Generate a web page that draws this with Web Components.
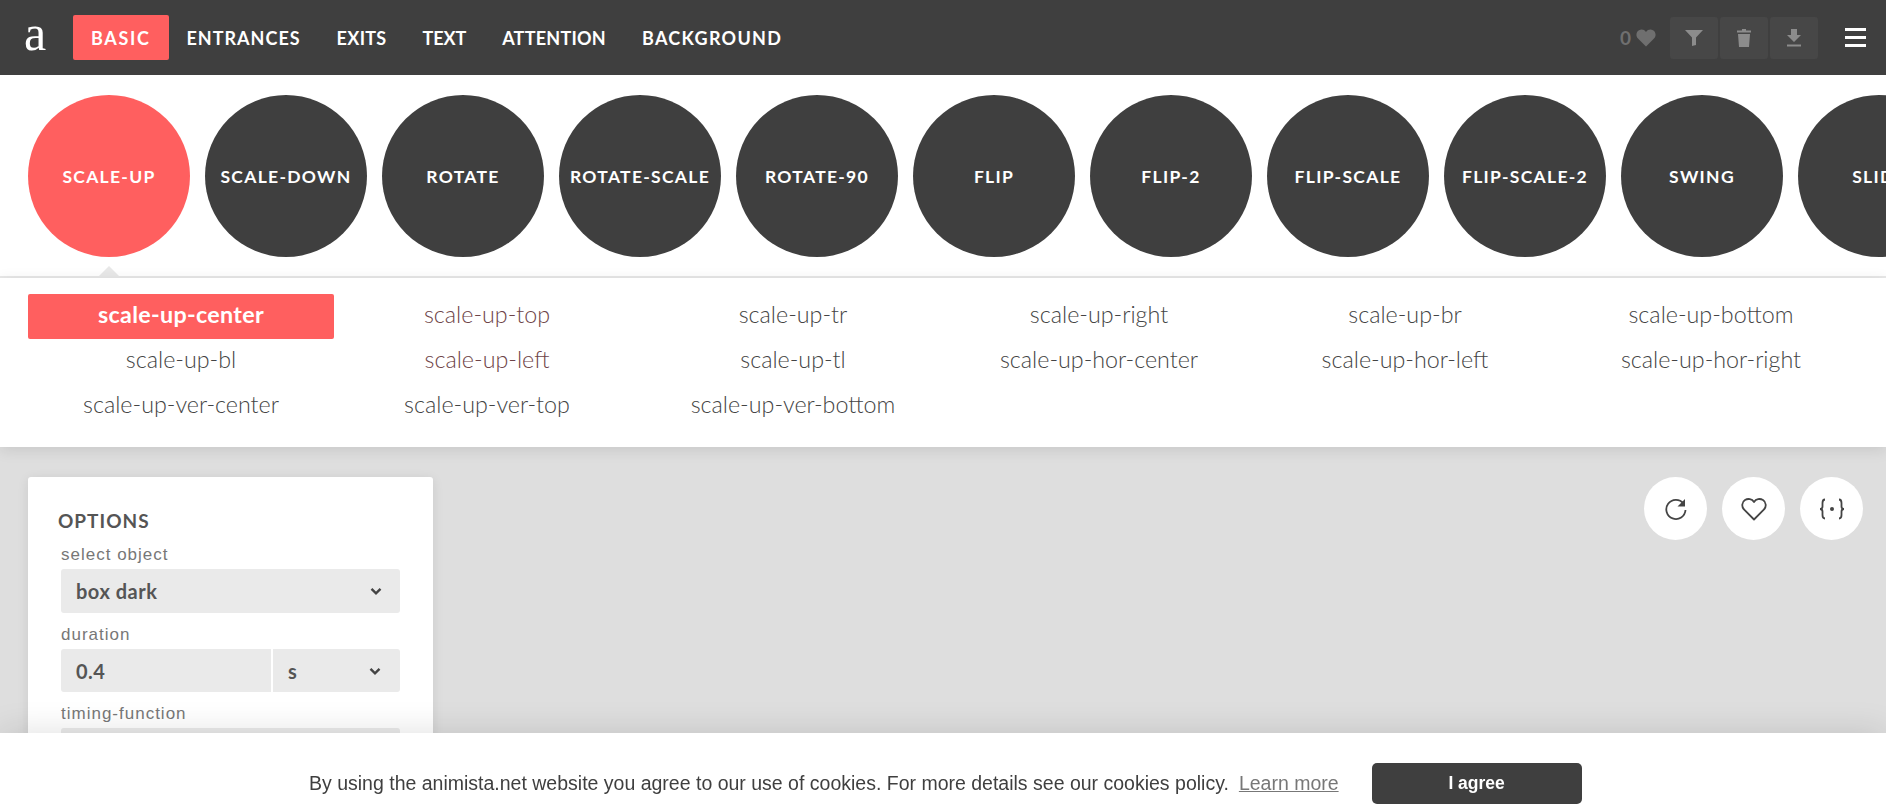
<!DOCTYPE html>
<html>
<head>
<meta charset="utf-8">
<title>animista</title>
<style>
    html, body { margin: 0; height: 100%; overflow: hidden; background: #dedede; }
    body { font-family: "Lato", "Liberation Sans", sans-serif; }
</style>
</head>
<body>
<an-topbar>
    <an-nav active style="letter-spacing:1.65px">BASIC</an-nav>
    <an-nav style="letter-spacing:1px">ENTRANCES</an-nav>
    <an-nav style="letter-spacing:.3px">EXITS</an-nav>
    <an-nav style="letter-spacing:-.1px">TEXT</an-nav>
    <an-nav style="letter-spacing:.25px">ATTENTION</an-nav>
    <an-nav style="letter-spacing:1.3px">BACKGROUND</an-nav>
</an-topbar>
<an-circles>
    <an-circle active>SCALE-UP</an-circle>
    <an-circle>SCALE-DOWN</an-circle>
    <an-circle>ROTATE</an-circle>
    <an-circle>ROTATE-SCALE</an-circle>
    <an-circle>ROTATE-90</an-circle>
    <an-circle>FLIP</an-circle>
    <an-circle>FLIP-2</an-circle>
    <an-circle>FLIP-SCALE</an-circle>
    <an-circle>FLIP-SCALE-2</an-circle>
    <an-circle>SWING</an-circle>
    <an-circle>SLIDE</an-circle>
</an-circles>
<an-sublist>
    <an-subitem active>scale-up-center</an-subitem>
    <an-subitem visited>scale-up-top</an-subitem>
    <an-subitem>scale-up-tr</an-subitem>
    <an-subitem>scale-up-right</an-subitem>
    <an-subitem>scale-up-br</an-subitem>
    <an-subitem>scale-up-bottom</an-subitem>
    <an-subitem>scale-up-bl</an-subitem>
    <an-subitem visited>scale-up-left</an-subitem>
    <an-subitem>scale-up-tl</an-subitem>
    <an-subitem>scale-up-hor-center</an-subitem>
    <an-subitem>scale-up-hor-left</an-subitem>
    <an-subitem>scale-up-hor-right</an-subitem>
    <an-subitem>scale-up-ver-center</an-subitem>
    <an-subitem>scale-up-ver-top</an-subitem>
    <an-subitem>scale-up-ver-bottom</an-subitem>
</an-sublist>
<an-stage>
    <an-options></an-options>
    <an-actions></an-actions>
</an-stage>
<an-cookie></an-cookie>

<script>
// small helper, every element below just needs a shadow root with some html in it
function shadow(el, html) {
    el.attachShadow({mode: "open"});
    el.shadowRoot.innerHTML = html;
}

const chevron = `<svg width="14" height="14" viewBox="0 0 14 14"><path d="M2.5 4.8 7 9.3l4.5-4.5" fill="none" stroke="#444" stroke-width="2.4"/></svg>`;

class AnTopbar extends HTMLElement {
    connectedCallback() {
        shadow(this, `
            <style>
                :host { display: flex; align-items: center; height: 75px; background: #3f3f3f; padding: 0 20px 0 24px; }
                .logo { font: 400 50px/1 "Liberation Serif", serif; color: #fff; width: 49px; margin-top: -10px; }
                nav { display: flex; flex: 1; }
                .count { font: 700 19px "Lato", sans-serif; color: #6f6f6f; display: flex; align-items: center; gap: 5px; margin-right: 14px; }
                .tools { display: flex; gap: 2px; margin-right: 27px; }
                .tool { width: 48px; height: 42px; border-radius: 3px; background: #474747; display: flex; align-items: center; justify-content: center; }
                .burger { width: 21px; display: flex; flex-direction: column; gap: 5px; }
                .burger i { display: block; height: 3px; background: #fff; }
            </style>
            <div class="logo">a</div>
            <nav><slot></slot></nav>
            <div class="count">0
                <svg width="20" height="18" viewBox="0 0 20 18"><path d="M10 17.5 2 9.6C-.6 7 .2 2.6 3 1.2 5.6-.1 8.4.6 10 3c1.6-2.4 4.4-3.100 7-1.800 2.800 1.400 3.600 5.800 1 8.400z" fill="#6f6f6f"/></svg>
            </div>
            <div class="tools">
                <div class="tool"><svg width="18" height="16" viewBox="0 0 18 16"><path d="M0 0h18l-7 7.500V15l-4 1V7.500z" fill="#8c8c8c"/></svg></div>
                <div class="tool"><svg width="14" height="18" viewBox="0 0 14 18"><path d="M5 0h4v1.500h5v2H0v-2h5zM1 5h12l-1 13H2z" fill="#8c8c8c"/></svg></div>
                <div class="tool"><svg width="14" height="18" viewBox="0 0 14 18"><path d="M4 0h6v6h4l-7 7-7-7h4zM0 15.500h14V17.500H0z" fill="#8c8c8c"/></svg></div>
            </div>
            <div class="burger"><i></i><i></i><i></i></div>
        `);
    }
}

class AnNav extends HTMLElement {
    connectedCallback() {
        shadow(this, `
            <style>
                :host { display: block; height: 45px; padding: 0 18px; border-radius: 2px; color: #fff;
                        font: 700 18px/47px "Lato", sans-serif; }
                :host([active]) { background: #ff5f5f; }
            </style>
            <slot></slot>
        `);
    }
}

class AnCircles extends HTMLElement {
    connectedCallback() {
        shadow(this, `
            <style>
                :host { display: flex; gap: 15px; position: relative; overflow: hidden; background: #fff; padding: 20px 0 19px 28px; border-bottom: 2px solid #e8e8e8; }
                .tip { position: absolute; left: 99px; bottom: 0; width: 0; height: 0; border: 10px solid transparent; border-top: 0; border-bottom-color: #e8e8e8; }
            </style>
            <slot></slot>
            <div class="tip"></div>
        `);
    }
}

class AnCircle extends HTMLElement {
    connectedCallback() {
        shadow(this, `
            <style>
                :host { flex: none; display: flex; align-items: center; justify-content: center; width: 162px; height: 162px; border-radius: 50%;
                        background: #3f3f3f; color: #fff; font: 700 17.500px/20px "Lato", sans-serif; letter-spacing: 1.300px; white-space: nowrap; padding-top: 2px; box-sizing: border-box; }
                :host([active]) { background: #ff5f5f; }
            </style>
            <slot></slot>
        `);
    }
}

class AnSublist extends HTMLElement {
    connectedCallback() {
        shadow(this, `
            <style>
                :host { display: grid; grid-template-columns: repeat(6, 306px); grid-auto-rows: 45px; position: relative; background: #fff;
                        padding: 16px 0 18px 28px; box-shadow: 0 3px 14px rgba(0,0,0,.1); }
            </style>
            <slot></slot>
        `);
    }
}

class AnSubitem extends HTMLElement {
    connectedCallback() {
        shadow(this, `
            <style>
                :host { display: block; text-align: center; font: 300 23.300px/41px "Lato", sans-serif; color: #444; border-radius: 2px; white-space: nowrap; }
                :host([visited]) { color: #6e4448; }
                :host([active]) { background: #ff5f5f; color: #fff; font-weight: 700; letter-spacing: .3px; }
            </style>
            <slot></slot>
        `);
    }
}

class AnStage extends HTMLElement {
    connectedCallback() {
        shadow(this, `
            <style>
                :host { display: flex; justify-content: space-between; align-items: flex-start; padding: 30px 23px 0 28px; }
            </style>
            <slot></slot>
        `);
    }
}

class AnOptions extends HTMLElement {
    connectedCallback() {
        shadow(this, `
            <style>
                :host { display: block; width: 405px; height: 330px; box-sizing: border-box; background: #fff; border-radius: 3px; padding: 34px 33px 0 33px;
                        box-shadow: 0 2px 12px rgba(0,0,0,.09); }
                h3 { margin: 0 0 0 -3px; font: 700 19px/20px "Lato", sans-serif; letter-spacing: 1px; color: #555; }
                label { display: block; font: 400 17px/20px "Liberation Sans", sans-serif; letter-spacing: 1px; color: #777; margin-top: 12px; height: 24px; }
                h3 + label { margin-top: 14px; }
                .row { display: flex; gap: 2px; }
                .box { display: flex; justify-content: space-between; align-items: center; box-sizing: border-box; height: 44px; background: #eaeaea; border-radius: 3px;
                       padding: 0 17px 0 15px; font: 700 20px "Lato", sans-serif; letter-spacing: .5px; color: #555; flex: 1; }
                .num { flex: none; width: 210px; border-radius: 3px 0 0 3px; height: 43px; }
                .unit { border-radius: 0 3px 3px 0; height: 43px; padding-right: 18px; }
            </style>
            <h3>OPTIONS</h3>
            <label>select object</label>
            <div class="row"><div class="box">box dark ${chevron}</div></div>
            <label>duration</label>
            <div class="row">
                <div class="box num">0.4</div>
                <div class="box unit">s ${chevron}</div>
            </div>
            <label>timing-function</label>
            <div class="row"><div class="box"></div></div>
        `);
    }
}

class AnActions extends HTMLElement {
    connectedCallback() {
        shadow(this, `
            <style>
                :host { display: flex; gap: 15px; }
                div { width: 63px; height: 63px; border-radius: 50%; background: #fff; display: flex; align-items: center; justify-content: center; }
            </style>
            <div><svg width="24" height="24" viewBox="0 0 24 24"><path d="M19.500 6.500A9.600 9.600 0 1 0 21.500 13" fill="none" stroke="#444" stroke-width="1.800"/><path d="M21 2v7.500h-7.500z" fill="#444"/></svg></div>
            <div><svg width="26" height="24" viewBox="0 0 26 24"><path d="M13 22.500 3.200 12.700C.2 9.700.9 5 4 3 7 1.200 11 1.800 13 5c2-3.200 6-3.800 9-2 3.100 2 3.800 6.700.8 9.700z" fill="none" stroke="#444" stroke-width="1.800" stroke-linejoin="round"/></svg></div>
            <div><svg width="26" height="22" viewBox="0 0 26 22"><path d="M6 1.500c-2.500 0-2.500 1.500-2.500 3.500v3.500C3.500 10 2.500 11 1 11c1.500 0 2.500 1 2.500 2.500V17c0 2 0 3.500 2.500 3.500M20 1.500c2.500 0 2.500 1.500 2.500 3.500v3.500c0 1.500 1 2.500 2.500 2.500-1.500 0-2.500 1-2.500 2.500V17c0 2 0 3.500-2.500 3.500" fill="none" stroke="#444" stroke-width="1.800"/><circle cx="13" cy="11" r="2" fill="#444"/></svg></div>
        `);
    }
}

class AnCookie extends HTMLElement {
    connectedCallback() {
        shadow(this, `
            <style>
                :host { position: fixed; left: 0; right: 0; bottom: 0; height: 76px; background: #fff; box-shadow: 0 0 34px rgba(0,0,0,.13);
                        display: flex; align-items: center; padding-left: 309px; box-sizing: border-box;
                        font: 400 19.500px "Liberation Sans", sans-serif; color: #3f3f3f; }
                a { color: #777; text-decoration: underline; margin-left: 10px; }
                button { all: unset; box-sizing: border-box; width: 210px; height: 41px; margin-left: 33px; border-radius: 5px; background: #3f3f3f; color: #fff;
                         font: 700 17.500px "Liberation Sans", sans-serif; text-align: center; }
                span, a, button { margin-top: 24px; }
            </style>
            <span>By using the animista.net website you agree to our use of cookies. For more details see our cookies policy.</span>
            <a>Learn more</a>
            <button>I agree</button>
        `);
    }
}

customElements.define("an-topbar", AnTopbar);
customElements.define("an-nav", AnNav);
customElements.define("an-circles", AnCircles);
customElements.define("an-circle", AnCircle);
customElements.define("an-sublist", AnSublist);
customElements.define("an-subitem", AnSubitem);
customElements.define("an-stage", AnStage);
customElements.define("an-options", AnOptions);
customElements.define("an-actions", AnActions);
customElements.define("an-cookie", AnCookie);
</script>
</body>
</html>
